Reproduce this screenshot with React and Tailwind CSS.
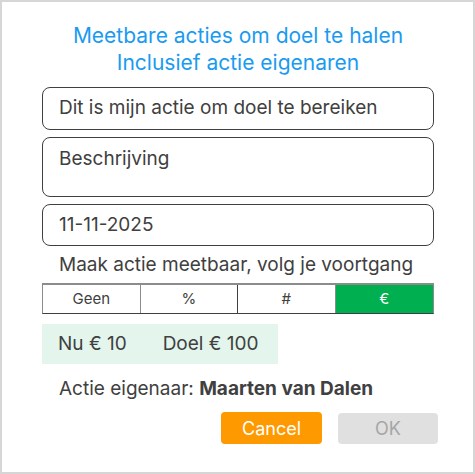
export default function App() {
  const font = { fontFamily: '"Inter", "Liberation Sans", sans-serif' };
  return (
    <div className="w-[475px] h-[474px] bg-white border-2 border-[#d6d6d6] box-border" style={font}>
      <div className="flex flex-col pl-[40px] pr-[39px]">
        <div className="mt-[20px] text-center text-[21px] leading-[27px] text-[#1a9bf0]">
          <div>Meetbare acties om doel te halen</div>
          <div>Inclusief actie eigenaren</div>
        </div>
        <div className="mt-[11px] h-[43px] border border-[#404040] rounded-[8px] flex items-center pl-[16px] text-[19px] text-[#404040]">
          Dit is mijn actie om doel te bereiken
        </div>
        <div className="mt-[7px] h-[60px] border border-[#404040] rounded-[8px] pl-[16px] pt-[8px] text-[19px] leading-[26px] text-[#404040]">
          Beschrijving
        </div>
        <div className="mt-[7px] h-[42px] border border-[#404040] rounded-[8px] flex items-center pl-[16px] text-[19px] text-[#404040]">
          11-11-2025
        </div>
        <div className="mt-[6px] pl-[17px] text-[19px] leading-[26px] text-[#404040]">
          Maak actie meetbaar, volg je voortgang
        </div>
        <div className="mt-[5px] h-[31px] grid grid-cols-4 border-t-2 border-t-[#8c8c8c] border-b border-b-[#404040] border-x border-x-[#8c8c8c] text-[15px] text-[#404040]">
          <div className="flex items-center justify-center border-r border-[#8c8c8c]">Geen</div>
          <div className="flex items-center justify-center border-r border-[#404040]">%</div>
          <div className="flex items-center justify-center border-r border-[#8c8c8c]">#</div>
          <div className="flex items-center justify-center bg-[#00b050] text-white">€</div>
        </div>
        <div className="mt-[10px] w-[236px] h-[40px] bg-[#e3f5ec] flex items-center pl-[16px] text-[19px] text-[#404040]">
          <span>Nu € 10</span>
          <span className="ml-[36px]">Doel € 100</span>
        </div>
        <div className="mt-[12px] pl-[17px] text-[19px] leading-[26px] text-[#404040]">
          Actie eigenaar: <span className="font-bold">Maarten van Dalen</span>
        </div>
        <div className="mt-[10px] flex justify-end gap-[16px] -mr-[4px]">
          <button className="w-[101px] h-[32px] rounded-[4px] bg-[#ff9900] text-white text-[18px]">Cancel</button>
          <button className="w-[100px] h-[31px] mt-[1px] rounded-[4px] bg-[#e0e0e0] text-[#a6a6a6] text-[18px]">OK</button>
        </div>
      </div>
    </div>
  );
}
